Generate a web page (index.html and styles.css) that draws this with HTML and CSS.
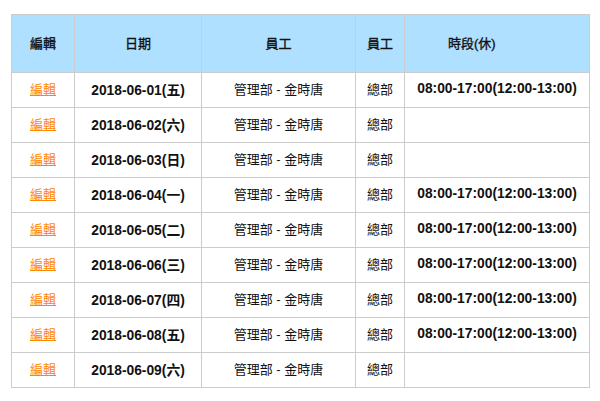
FILE: index.html
```html
<!DOCTYPE html>
<html lang="zh-Hant">
<head>
<meta charset="utf-8">
<link rel="stylesheet" href="styles.css">
</head>
<body>
<table class="grid">
  <colgroup>
    <col class="c1"><col class="c2"><col class="c3"><col class="c4"><col class="c5">
  </colgroup>
  <thead>
    <tr><th>編輯</th><th>日期</th><th>員工</th><th>員工</th><th class="th-time">時段(休)</th></tr>
  </thead>
  <tbody>
    <tr><td><a href="#">編輯</a></td><td class="b">2018-06-01(五)</td><td>管理部 - 金時唐</td><td>總部</td><td class="b">08:00-17:00(12:00-13:00)</td></tr>
    <tr><td><a href="#">編輯</a></td><td class="b">2018-06-02(六)</td><td>管理部 - 金時唐</td><td>總部</td><td class="b"></td></tr>
    <tr><td><a href="#">編輯</a></td><td class="b">2018-06-03(日)</td><td>管理部 - 金時唐</td><td>總部</td><td class="b"></td></tr>
    <tr><td><a href="#">編輯</a></td><td class="b">2018-06-04(一)</td><td>管理部 - 金時唐</td><td>總部</td><td class="b">08:00-17:00(12:00-13:00)</td></tr>
    <tr><td><a href="#">編輯</a></td><td class="b">2018-06-05(二)</td><td>管理部 - 金時唐</td><td>總部</td><td class="b">08:00-17:00(12:00-13:00)</td></tr>
    <tr><td><a href="#">編輯</a></td><td class="b">2018-06-06(三)</td><td>管理部 - 金時唐</td><td>總部</td><td class="b">08:00-17:00(12:00-13:00)</td></tr>
    <tr><td><a href="#">編輯</a></td><td class="b">2018-06-07(四)</td><td>管理部 - 金時唐</td><td>總部</td><td class="b">08:00-17:00(12:00-13:00)</td></tr>
    <tr><td><a href="#">編輯</a></td><td class="b">2018-06-08(五)</td><td>管理部 - 金時唐</td><td>總部</td><td class="b">08:00-17:00(12:00-13:00)</td></tr>
    <tr><td><a href="#">編輯</a></td><td class="b">2018-06-09(六)</td><td>管理部 - 金時唐</td><td>總部</td><td class="b"></td></tr>
  </tbody>
</table>
</body>
</html>
```

FILE: styles.css
```css
html, body {
  margin: 0;
  padding: 0;
  background: #ffffff;
}
body {
  font-family: "Liberation Sans", Arial, "Noto Sans CJK TC", sans-serif;
  font-size: 13px;
  color: #111111;
}
.grid {
  margin: 14px 0 0 11px;
  border-collapse: collapse;
  table-layout: fixed;
  width: 578px;
}
.c1 { width: 63px; }
.c2 { width: 127px; }
.c3 { width: 154px; }
.c4 { width: 49px; }
.c5 { width: 185px; }
.grid th, .grid td {
  border: 1px solid #cccccc;
  text-align: center;
  padding: 0;
  white-space: nowrap;
}
.grid thead th {
  background: #b0e0ff;
  height: 55px;
  padding-bottom: 2px;
  font-weight: normal;
  font-size: 13px;
  -webkit-text-stroke: 0.35px #111111;
}
.grid thead th.th-time {
  text-align: left;
  padding-left: 43px;
}
.grid tbody td {
  height: 31px;
  padding-bottom: 3px;
}
.grid td.b {
  font-weight: bold;
  font-size: 13.8px;
}
.grid a {
  color: #ff8800;
  text-decoration: underline;
}
```
